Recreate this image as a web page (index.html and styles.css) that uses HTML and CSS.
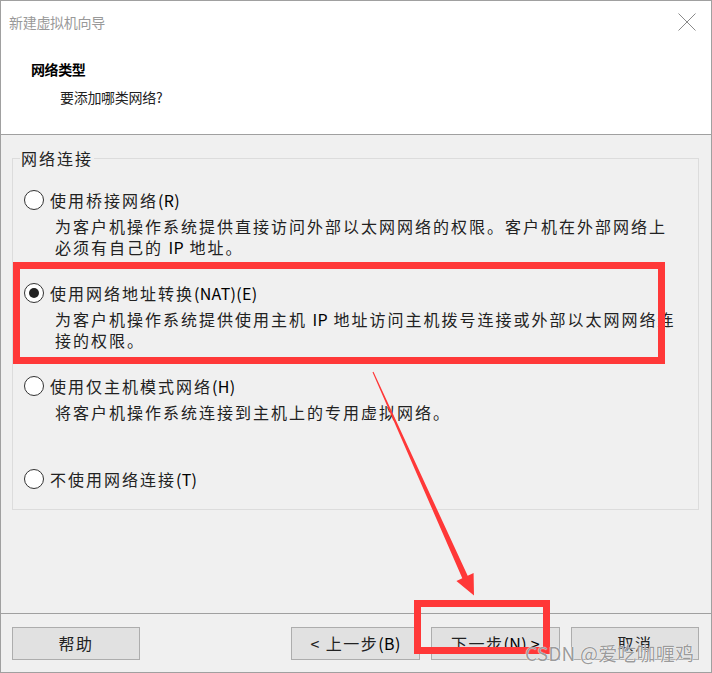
FILE: index.html
```html
<!DOCTYPE html>
<html lang="zh-CN">
<head>
<meta charset="utf-8">
<title>新建虚拟机向导</title>
<link rel="stylesheet" href="styles.css">
</head>
<body>
<div class="window">
  <div class="header">
    <div class="titlebar">
      <span class="title">新建虚拟机向导</span>
      <svg class="close" width="18" height="18" viewBox="0 0 18 18"><path d="M0.5 0.5 L17.5 17.5 M17.5 0.5 L0.5 17.5" stroke="#8a8a8a" stroke-width="1" fill="none"/></svg>
    </div>
    <div class="hdr">
      <div class="hdr-title">网络类型</div>
      <div class="hdr-sub">要添加哪类网络?</div>
    </div>
  </div>
  <div class="body">
    <fieldset class="group">
      <legend class="legend">网络连接</legend>
      <div class="option">
        <span class="radio"></span>
        <div class="label">使用桥接网络<span class="lat">(R)</span></div>
        <div class="desc">为客户机操作系统提供直接访问外部以太网网络的权限。客户机在外部网络上<br>必须有自己的 <span class="lat">IP</span> 地址。</div>
      </div>
      <div class="option">
        <span class="radio checked"></span>
        <div class="label">使用网络地址转换<span class="lat">(NAT)(E)</span></div>
        <div class="desc">为客户机操作系统提供使用主机 <span class="lat">IP</span> 地址访问主机拨号连接或外部以太网网络连<br>接的权限。</div>
      </div>
      <div class="option">
        <span class="radio"></span>
        <div class="label">使用仅主机模式网络<span class="lat">(H)</span></div>
        <div class="desc">将客户机操作系统连接到主机上的专用虚拟网络。</div>
      </div>
      <div class="option">
        <span class="radio"></span>
        <div class="label">不使用网络连接<span class="lat">(T)</span></div>
      </div>
    </fieldset>
  </div>
  <div class="footer">
    <button class="btn">帮助</button>
    <button class="btn btn-back">&lt; 上一步<span class="lat">(B)</span></button>
    <button class="btn">下一步<span class="lat">(N) &gt;</span></button>
    <button class="btn">取消</button>
  </div>
</div>

<div class="mark mark-nat"></div>
<div class="mark mark-next"></div>
<svg class="arrow" width="712" height="673" viewBox="0 0 712 673">
  <polygon points="372.5,372.2 373.5,371.8 467.7,575.8 473.6,573.0 474,595.5 456.4,581.0 462.3,578.2" fill="#ff3838"/>
</svg>
<div class="watermark">CSDN @爱吃咖喱鸡</div>
</body>
</html>
```
FILE: styles.css
```css
html, body {
  margin: 0;
  padding: 0;
}
body {
  width: 712px;
  height: 673px;
  position: relative;
  overflow: hidden;
  font-family: "Noto Sans CJK SC", "Noto Sans", sans-serif;
  color: #222;
  background: #f0f0f0;
}
.window {
  width: 712px;
  height: 673px;
  box-sizing: border-box;
  border: 1px solid #a0a0a0;
  display: flex;
  flex-direction: column;
  background: #f0f0f0;
}
.header {
  background: #fff;
  border-bottom: 1px solid #a0a0a0;
}
.titlebar {
  height: 42px;
  display: flex;
  align-items: center;
  justify-content: space-between;
  padding: 0 15px 0 8px;
}
.title {
  font-size: 14px;
  line-height: 42px;
  color: #999;
  letter-spacing: -0.3px;
}
.close {
  display: block;
}
.hdr {
  padding: 16px 0 27px 0;
}
.hdr-title {
  font-size: 14px;
  font-weight: bold;
  line-height: 20px;
  padding-left: 30px;
  color: #000;
  letter-spacing: -0.4px;
}
.hdr-sub {
  font-size: 14px;
  line-height: 20px;
  margin-top: 8px;
  padding-left: 59px;
  color: #222;
  letter-spacing: -0.3px;
}
.body {
  flex: 1;
  padding: 13px 12px 0 11px;
}
.group {
  margin: 0;
  border: 1px solid #dcdcdc;
  padding: 21px 10px 19px 7px;
  display: flex;
  flex-direction: column;
  gap: 24px;
}
.legend {
  padding: 0 1px;
  font-size: 16px;
  line-height: 20px;
  letter-spacing: 2px;
}
.option {
  display: grid;
  grid-template-columns: 26px 1fr;
  margin-left: 4px;
  font-size: 16px;
  letter-spacing: 2px;
}
.radio {
  grid-row: 1;
  grid-column: 1;
  align-self: center;
  width: 20px;
  height: 20px;
  box-sizing: border-box;
  border: 1px solid #333;
  border-radius: 50%;
  background: #fff;
  display: flex;
  align-items: center;
  justify-content: center;
}
.radio.checked::after {
  content: "";
  width: 10px;
  height: 10px;
  border-radius: 50%;
  background: #222;
}
.label {
  grid-row: 1;
  grid-column: 2;
  line-height: 22px;
  white-space: nowrap;
}
.desc {
  grid-row: 2;
  grid-column: 2;
  margin: 5px 0 0 5px;
  line-height: 21px;
  min-height: 42px;
  white-space: nowrap;
}
.lat {
  letter-spacing: 0.3px;
  color: #000;
}
.footer {
  height: 59px;
  box-sizing: border-box;
  border-top: 1px solid #a0a0a0;
  padding: 13px 12px 0 11px;
  display: flex;
  align-items: flex-start;
  gap: 11px;
}
.btn {
  height: 33px;
  width: 129px;
  box-sizing: border-box;
  background: #e1e1e1;
  border: 1px solid #adadad;
  padding: 0;
  margin: 0;
  font-family: "Noto Sans CJK SC", "Noto Sans", sans-serif;
  font-size: 16px;
  letter-spacing: 1.5px;
  color: #222;
  line-height: 31px;
}
.btn:first-child {
  width: 128px;
}
.btn:last-child {
  width: 128px;
}
.btn-back {
  margin-left: auto;
}
.mark {
  position: absolute;
  box-sizing: border-box;
  border: 7px solid #ff3838;
}
.mark-nat {
  left: 13px;
  top: 262px;
  width: 652px;
  height: 102px;
}
.mark-next {
  left: 414px;
  top: 600px;
  width: 136px;
  height: 54px;
}
.arrow {
  position: absolute;
  left: 0;
  top: 0;
  pointer-events: none;
}
.watermark {
  position: absolute;
  left: 525px;
  top: 640px;
  font-size: 19px;
  line-height: 26px;
  color: rgba(110, 110, 110, 0.7);
  text-shadow: 0 0 1px #fff, 0 0 1px #fff;
  white-space: nowrap;
  letter-spacing: 0.2px;
}
```
